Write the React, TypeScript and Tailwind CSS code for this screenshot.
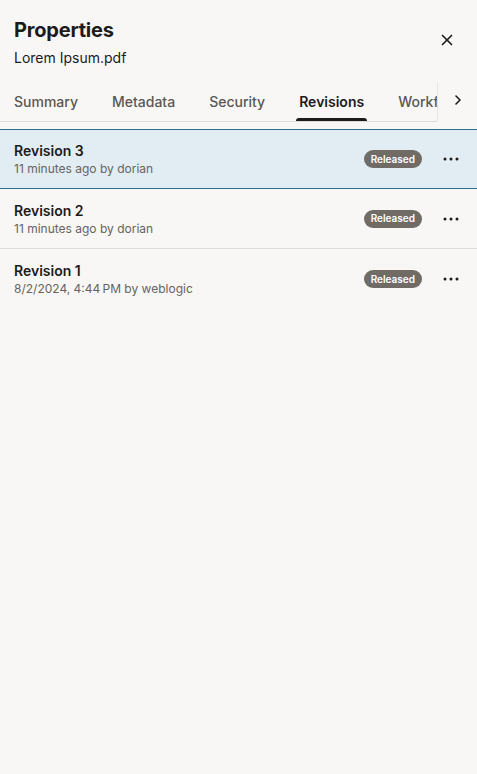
import { X, ChevronRight } from 'lucide-react';

const tabs = ['Summary', 'Metadata', 'Security', 'Revisions', 'Workflow'];

const revisions = [
  { name: 'Revision 3', meta: '11 minutes ago by dorian', selected: true },
  { name: 'Revision 2', meta: '11 minutes ago by dorian', selected: false },
  { name: 'Revision 1', meta: '8/2/2024, 4:44\u202FPM by weblogic', selected: false },
];

function Dots() {
  return (
    <svg width="16" height="4" viewBox="0 0 16 4" fill="#1c1b1a">
      <circle cx="2" cy="2" r="1.5" />
      <circle cx="8" cy="2" r="1.5" />
      <circle cx="14" cy="2" r="1.5" />
    </svg>
  );
}

export default function App() {
  return (
    <div
      className="min-h-[774px] w-[477px] bg-[#f8f7f5] text-[#1c1b1a]"
      style={{ fontFamily: 'Inter, "Liberation Sans", sans-serif' }}
    >
      {/* header */}
      <div className="flex items-start justify-between pl-[14px] pr-[20px] pt-4">
        <div>
          <h1 className="text-[20px] font-bold leading-[28px] tracking-[-0.2px]">Properties</h1>
          <p className="mt-1 text-[14px] leading-5">Lorem Ipsum.pdf</p>
        </div>
        <button className="mt-[14px] flex h-5 w-5 items-center justify-center">
          <X size={18} strokeWidth={2.2} />
        </button>
      </div>

      {/* tabs */}
      <div className="mt-[14px] flex h-10">
        <div className="flex w-[437px] overflow-hidden border-b border-[#dddbd8] pl-[11px]">
          <div className="flex gap-[28px]">
            {tabs.map((t) => {
              const active = t === 'Revisions';
              return (
                <div
                  key={t}
                  className={`relative flex h-[39px] shrink-0 items-center px-[3px] text-[14px] font-medium ${
                    active ? 'font-semibold text-[#1c1b1a]' : 'text-[#595754]'
                  }`}
                >
                  {t}
                  {active && (
                    <span className="absolute bottom-0 left-0 right-0 h-[3px] rounded-t-[3px] bg-[#1c1b1a]" />
                  )}
                </div>
              );
            })}
          </div>
        </div>
        <div className="flex h-[39px] flex-1 items-center justify-center border-l border-[#e8e6e3]">
          <ChevronRight size={16} strokeWidth={2.4} className="-mt-1" />
        </div>
      </div>

      {/* revisions list */}
      <div className="mt-[7px]">
        {revisions.map((r) => (
          <div
            key={r.name}
            className={`flex h-[60px] items-center pl-[14px] pr-[11px] ${
              r.selected
                ? 'border-y border-[#2c6e8f] bg-[#e1edf3]'
                : 'border-b border-[#dddbd8]'
            } last:border-b-0`}
          >
            <div className="flex-1">
              <div className="text-[14px] font-semibold leading-5">{r.name}</div>
              <div className="text-[12px] leading-4 text-[#666461]">{r.meta}</div>
            </div>
            <span className="flex h-[18px] items-center rounded-full bg-[#716b66] px-[7px] text-[10px] font-semibold text-white">
              Released
            </span>
            <button className="ml-[14px] flex h-6 w-[30px] items-center justify-center">
              <Dots />
            </button>
          </div>
        ))}
      </div>
    </div>
  );
}
